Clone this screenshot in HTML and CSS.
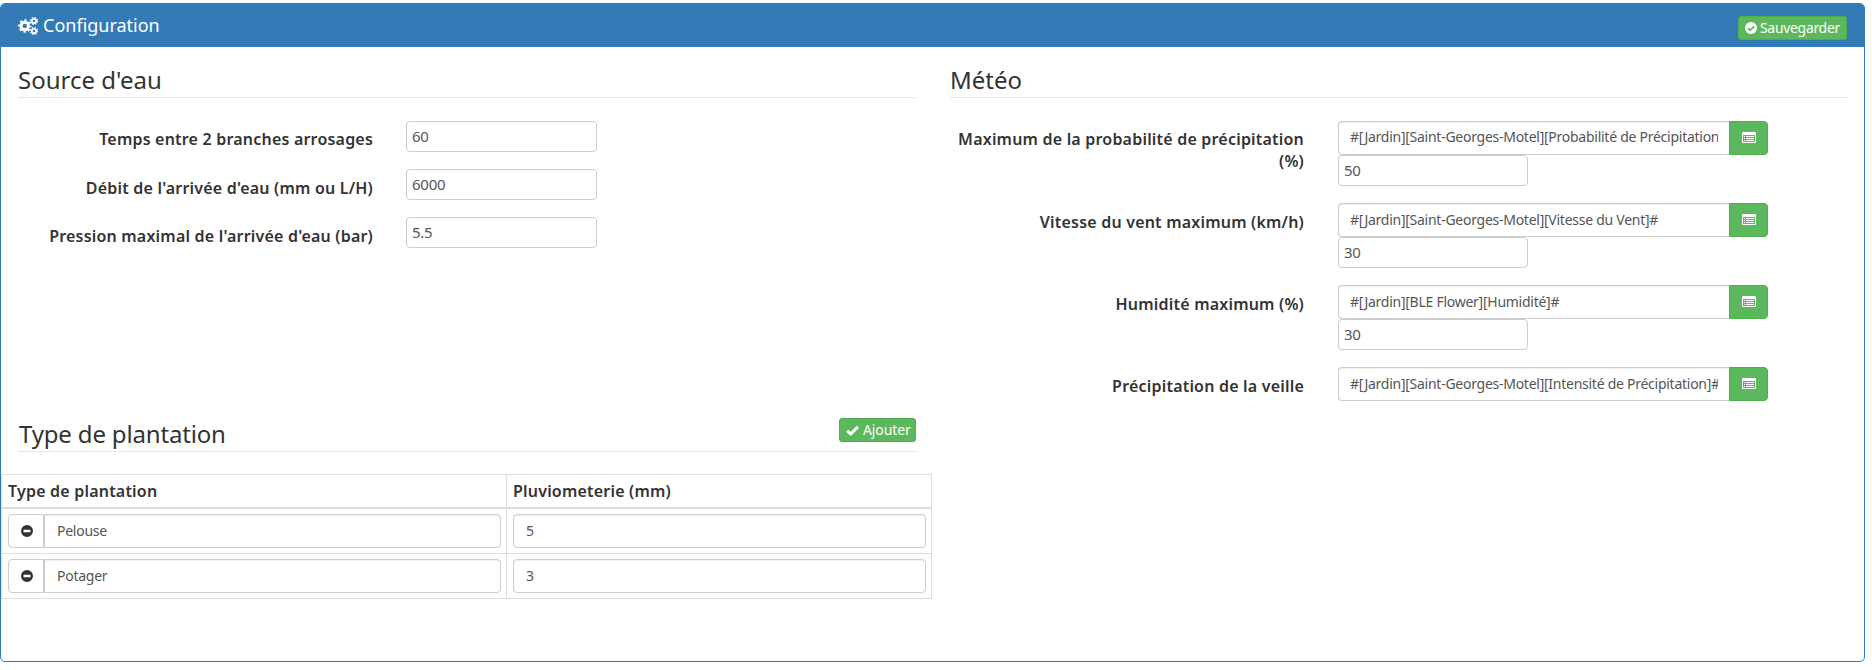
FILE: index.html
```html
<!DOCTYPE html>
<html lang="fr">
<head>
<meta charset="utf-8">
<title>Configuration</title>
<link rel="stylesheet" href="styles.css">
</head>
<body>
<svg class="defs" width="0" height="0">
  <symbol id="list" viewBox="0 0 14 11">
    <path fill="#fff" fill-rule="evenodd" d="M1 0h12a1 1 0 0 1 1 1v9a1 1 0 0 1-1 1H1a1 1 0 0 1-1-1V1a1 1 0 0 1 1-1zM1 3v7h12V3zM2 4h1v1H2zM4 4h8v1H4zM2 6h1v1H2zM4 6h8v1H4zM2 8h1v1H2zM4 8h8v1H4z"/>
  </symbol>
  <symbol id="minus" viewBox="0 0 12 12">
    <path fill="#333" fill-rule="evenodd" d="M6 0a6 6 0 1 1 0 12A6 6 0 0 1 6 0zM3 4.8q-.5 0-.5.5v1.4q0 .5.5.5h6q.5 0 .5-.5V5.3q0-.5-.5-.5z"/>
  </symbol>
</svg>
<section class="panel">
  <header class="panel-heading">
    <h3 class="panel-title">
      <svg width="20" height="18" viewBox="0 0 20 18" fill="none" stroke="#fff">
        <circle cx="6.8" cy="9" r="3.7" stroke-width="3"/>
        <circle cx="6.8" cy="9" r="5.8" stroke-width="1.8" stroke-dasharray="2.28 2.275" stroke-dashoffset="1.14"/>
        <circle cx="16" cy="4" r="2.2" stroke-width="1.8"/>
        <circle cx="16" cy="4" r="3.4" stroke-width="1.3" stroke-dasharray="1.4 1.27"/>
        <circle cx="16" cy="14" r="2.2" stroke-width="1.8"/>
        <circle cx="16" cy="14" r="3.4" stroke-width="1.3" stroke-dasharray="1.4 1.27"/>
      </svg>
      <span>Configuration</span>
    </h3>
    <a class="btn btn-save"><svg width="12" height="12" viewBox="0 0 12 12"><circle cx="6" cy="6" r="6" fill="#fff"/><path d="M3 6.1l2.2 2.2L9.1 4.4" fill="none" stroke="#5cb85c" stroke-width="1.8"/></svg><span>Sauvegarder</span></a>
  </header>
  <div class="panel-body">
    <div class="col-left">
      <div class="block-water">
        <div class="legend"><span>Source d'eau</span></div>
        <div class="row"><label>Temps entre 2 branches arrosages</label><div class="field small">60</div></div>
        <div class="row"><label>Débit de l'arrivée d'eau (mm ou L/H)</label><div class="field small">6000</div></div>
        <div class="row"><label>Pression maximal de l'arrivée d'eau (bar)</label><div class="field small">5.5</div></div>
      </div>
      <div class="legend legend-plant"><span>Type de plantation</span>
        <a class="btn btn-add"><svg width="13" height="11" viewBox="0 0 13 11"><path d="M1.2 5.6l3.5 3.4L11.8 1.9" fill="none" stroke="#fff" stroke-width="3"/></svg><span>Ajouter</span></a>
      </div>
      <table class="plants">
        <thead><tr><th class="c1">Type de plantation</th><th>Pluviometerie (mm)</th></tr></thead>
        <tbody>
          <tr><td><div class="group"><a class="remove"><svg width="12" height="12"><use href="#minus"/></svg></a><div class="cell-input joined">Pelouse</div></div></td><td><div class="cell-input">5</div></td></tr>
          <tr><td><div class="group"><a class="remove"><svg width="12" height="12"><use href="#minus"/></svg></a><div class="cell-input joined">Potager</div></div></td><td><div class="cell-input">3</div></td></tr>
        </tbody>
      </table>
    </div>
    <div class="col-right">
      <div class="legend"><span>Météo</span></div>
      <div class="mrow"><label>Maximum de la probabilité de précipitation<br>(%)</label>
        <div class="fields"><div class="group"><div class="field cmd"><span>#[Jardin][Saint-Georges-Motel][Probabilité de Précipitation]#</span></div><a class="pick"><svg width="14" height="11"><use href="#list"/></svg></a></div><div class="field small">50</div></div></div>
      <div class="mrow"><label>Vitesse du vent maximum (km/h)</label>
        <div class="fields"><div class="group"><div class="field cmd"><span>#[Jardin][Saint-Georges-Motel][Vitesse du Vent]#</span></div><a class="pick"><svg width="14" height="11"><use href="#list"/></svg></a></div><div class="field small">30</div></div></div>
      <div class="mrow"><label>Humidité maximum (%)</label>
        <div class="fields"><div class="group"><div class="field cmd"><span>#[Jardin][BLE Flower][Humidité]#</span></div><a class="pick"><svg width="14" height="11"><use href="#list"/></svg></a></div><div class="field small">30</div></div></div>
      <div class="mrow"><label>Précipitation de la veille</label>
        <div class="fields"><div class="group"><div class="field cmd"><span>#[Jardin][Saint-Georges-Motel][Intensité de Précipitation]#</span></div><a class="pick"><svg width="14" height="11"><use href="#list"/></svg></a></div></div></div>
    </div>
  </div>
</section>
</body>
</html>
```
FILE: styles.css
```css
* { box-sizing: border-box; }
body { margin: 0; padding-top: 3px; background: #fff; color: #333; font: 14px/20px "Noto Sans", sans-serif; }
.defs { display: block; }
svg { flex: none; }
.panel { width: 1865px; height: 659px; border: 1px solid #337ab7; border-radius: 5px; overflow: hidden; }
.panel-heading { height: 43px; background: #337ab7; color: #fff; display: flex; justify-content: space-between; align-items: flex-start; padding: 12px 17px 0; }
.panel-title { margin: 0; display: flex; align-items: center; gap: 5px; height: 20px; font-size: 18px; font-weight: 400; }
.panel-title span { padding-bottom: 2px; }
.btn { display: flex; align-items: center; height: 24px; padding: 0 6px; background: #5cb85c; border: 1px solid #4cae4c; border-radius: 3px; color: #fff; font-size: 14px; white-space: nowrap; }
.btn-save { width: 109px; gap: 3px; letter-spacing: -.32px; }
.btn-add { width: 77px; gap: 4px; letter-spacing: -.1px; }
.panel-body { display: flex; gap: 18px; }
.col-left { width: 931px; }
.col-right { width: 897px; }
.legend { height: 51px; border-bottom: 1px solid #e5e5e5; font-size: 24px; line-height: 30px; padding-top: 18px; white-space: nowrap; }
.col-left .legend { margin: 0 16px 0 17px; }
.block-water { height: 353px; }
.row { display: flex; height: 31px; margin-top: 17px; }
.legend + .row, .legend + .mrow { margin-top: 23px; }
label { font-size: 16px; font-weight: 600; line-height: 22px; letter-spacing: .2px; text-align: right; white-space: nowrap; padding-top: 8px; }
.legend + .row label, .legend + .mrow label { padding-top: 7px; }
.row label { width: 372px; margin-right: 33px; }
.field { border: 1px solid #ccc; border-radius: 4px; color: #555; background: #fff; white-space: nowrap; letter-spacing: -.26px; }
.field.small { width: 191px; height: 31px; padding: 4px 5px; font-size: 15px; line-height: 20px; }
.mrow .field.small { width: 190px; }
.legend-plant { display: flex; justify-content: space-between; padding-top: 18px; height: 52px; line-height: 32px; letter-spacing: -.17px; }
.legend-plant > span { padding-left: 1px; }
.plants { width: 931px; margin-top: 22px; border-collapse: collapse; table-layout: fixed; border: 1px solid #ddd; }
.plants th { height: 33px; padding: 0 6px; border: 1px solid #ddd; border-bottom-width: 2px; text-align: left; font-size: 16px; font-weight: 600; letter-spacing: .2px; }
.plants .c1 { width: 505px; }
.plants td { height: 45px; padding: 5px 5px 5px 6px; border: 1px solid #ddd; }
.group { display: flex; }
.cell-input { flex: 1; height: 34px; border: 1px solid #ccc; border-radius: 4px; padding: 6px 12px; color: #555; letter-spacing: -.26px; box-shadow: inset 0 1px 1px rgba(0,0,0,.075); }
.joined { border-radius: 0 4px 4px 0; }
.remove { width: 36px; height: 34px; border: 1px solid #ccc; border-radius: 4px 0 0 4px; display: flex; align-items: center; justify-content: center; padding-left: 1px; }
.mrow { display: flex; margin-top: 17px; }
.mrow label { width: 354px; margin-right: 34px; }
.fields { width: 430px; }
.cmd { width: 391px; height: 34px; padding: 6px 11px; border-right: 0; border-radius: 4px 0 0 4px; box-shadow: inset 0 1px 1px rgba(0,0,0,.075); }
.legend + .mrow .cmd { padding-top: 5px; }
.cmd span { display: block; overflow: hidden; }
.pick { width: 39px; height: 34px; background: #5cb85c; border: 1px solid #4cae4c; border-radius: 0 4px 4px 0; display: flex; align-items: center; justify-content: center; padding-bottom: 2px; }
```
